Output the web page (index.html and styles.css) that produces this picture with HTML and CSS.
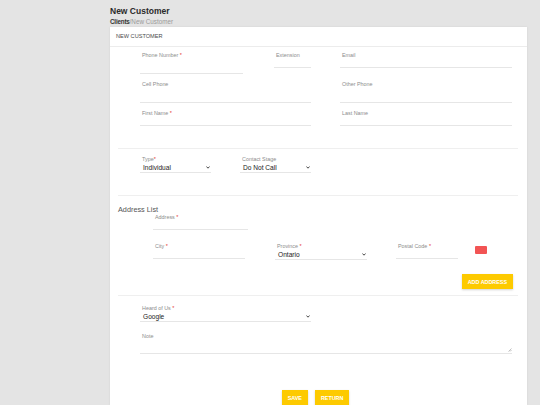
FILE: index.html
```html
<!DOCTYPE html>
<html>
<head>
<meta charset="utf-8">
<link rel="stylesheet" href="styles.css">
</head>
<body>
<div class="page">
  <h1 class="title">New Customer</h1>
  <div class="crumbs"><span class="crumb-link">Clients</span>/<span class="crumb-current">New Customer</span></div>
  <div class="card">
    <div class="card-header">NEW CUSTOMER</div>

    <div class="sec sec-contact">
      <div class="row">
        <div class="field w103"><div class="label">Phone Number <span class="req">*</span></div><div class="input tall"></div></div>
        <div class="field w37 ml31"><div class="label">Extension</div><div class="input"></div></div>
        <div class="field w172 ml29"><div class="label">Email</div><div class="input"></div></div>
      </div>
      <div class="row">
        <div class="field w171"><div class="label">Cell Phone</div><div class="input tall"></div></div>
        <div class="field w172 ml29"><div class="label">Other Phone</div><div class="input tall"></div></div>
      </div>
      <div class="row">
        <div class="field w171"><div class="label">First Name <span class="req">*</span></div><div class="input"></div></div>
        <div class="field w172 ml29"><div class="label">Last Name</div><div class="input"></div></div>
      </div>
    </div>
    <div class="divider"></div>

    <div class="sec sec-type">
      <div class="row">
        <div class="field w71"><div class="label">Type<span class="req">*</span></div>
          <div class="select"><span>Individual</span><svg class="chev" width="4" height="3" viewBox="0 0 4 3"><path d="M0.4 0.5 L2 2.2 L3.6 0.5" fill="none" stroke="#333" stroke-width="0.9"/></svg></div></div>
        <div class="field w71 ml29"><div class="label">Contact Stage</div>
          <div class="select"><span>Do Not Call</span><svg class="chev" width="4" height="3" viewBox="0 0 4 3"><path d="M0.4 0.5 L2 2.2 L3.6 0.5" fill="none" stroke="#333" stroke-width="0.9"/></svg></div></div>
      </div>
    </div>
    <div class="divider"></div>

    <div class="sec sec-addr">
      <div class="sec-title">Address List</div>
      <div class="addr-body">
        <div class="field w95"><div class="label">Address <span class="req">*</span></div><div class="input"></div></div>
        <div class="row addr-row">
          <div class="field w92"><div class="label">City <span class="req">*</span></div><div class="input"></div></div>
          <div class="field w92 ml30"><div class="label">Province <span class="req">*</span></div>
            <div class="select"><span>Ontario</span><svg class="chev" width="4" height="3" viewBox="0 0 4 3"><path d="M0.4 0.5 L2 2.2 L3.6 0.5" fill="none" stroke="#333" stroke-width="0.9"/></svg></div></div>
          <div class="field w62 ml29"><div class="label">Postal Code <span class="req">*</span></div><div class="input"></div></div>
          <div class="remove-btn"></div>
        </div>
        <div class="addr-actions"><div class="btn">ADD ADDRESS</div></div>
      </div>
    </div>
    <div class="divider tight"></div>

    <div class="sec sec-extra">
      <div class="field w171"><div class="label">Heard of Us <span class="req">*</span></div>
        <div class="select"><span>Google</span><svg class="chev" width="4" height="3" viewBox="0 0 4 3"><path d="M0.4 0.5 L2 2.2 L3.6 0.5" fill="none" stroke="#333" stroke-width="0.9"/></svg></div></div>
      <div class="field w372 note"><div class="label">Note</div>
        <div class="textarea"><svg class="grip" width="4" height="4" viewBox="0 0 4 4"><path d="M3.5 0.5 L0.5 3.5 M3.5 2 L2 3.5" stroke="#999" stroke-width="0.6"/></svg></div></div>
    </div>

    <div class="actions">
      <div class="btn">SAVE</div>
      <div class="btn">RETURN</div>
    </div>
  </div>
</div>
</body>
</html>
```

FILE: styles.css
```css
* { box-sizing: border-box; }
html, body { margin: 0; padding: 0; }
body {
  background: #e4e4e4;
  font-family: "Liberation Sans", Arial, sans-serif;
  width: 540px;
  height: 405px;
  overflow: hidden;
}
.page { margin-left: 110px; width: 417px; }
.title {
  margin: 0;
  padding-top: 6px;
  font-size: 8.5px;
  line-height: 10px;
  font-weight: 700;
  color: #2a2a2a;
}
.crumbs {
  margin-top: 2px;
  font-size: 6.3px;
  line-height: 8px;
  color: #9a9a9a;
  white-space: nowrap;
}
.crumb-link { color: #333; font-weight: 700; letter-spacing: -0.2px; }
.card {
  margin-top: 1px;
  background: #fff;
  box-shadow: 0 0 2px rgba(0,0,0,0.08);
  height: 378px;
  overflow: hidden;
}
.card-header {
  height: 20px;
  line-height: 19px;
  padding-left: 6px;
  font-size: 5.6px;
  color: #4a4a4a;
  border-bottom: 1px solid #ececec;
}
.row { display: flex; align-items: flex-start; }
.field { display: flex; flex-direction: column; flex: none; }
.label {
  font-size: 5.4px;
  line-height: 6px;
  height: 6px;
  color: #8c8c8c;
  padding-left: 2px;
  white-space: nowrap;
}
.req { color: #e53935; }
.input { height: 10px; border-bottom: 1px solid #e6e6e6; }
.input.tall { height: 16px; }
.select {
  height: 11px;
  border-bottom: 1px solid #e6e6e6;
  display: flex;
  align-items: center;
  justify-content: space-between;
  padding: 0 1px 0 3px;
  font-size: 6.6px;
  color: #222;
  white-space: nowrap;
}
.chev { display: block; }
.textarea {
  height: 15px;
  border-bottom: 1px solid #e6e6e6;
  position: relative;
}
.grip { position: absolute; right: 0; bottom: 1px; }

.w37 { width: 37px; }
.w62 { width: 62px; }
.w71 { width: 71px; }
.w92 { width: 92px; }
.w95 { width: 95px; }
.w103 { width: 103px; }
.w171 { width: 171px; }
.w172 { width: 172px; }
.w372 { width: 372px; }
.ml29 { margin-left: 29px; }
.ml30 { margin-left: 30px; }
.ml31 { margin-left: 31px; }

.divider {
  height: 1px;
  background: #efefef;
  margin: 22px 9px 0 8px;
}
.divider.tight { margin-top: 6px; }

.sec-contact { padding: 5px 0 0 30px; }
.sec-contact .row + .row { margin-top: 7px; }
.sec-type { padding: 7px 0 0 30px; }

.sec-addr { padding: 9px 14px 0 8px; }
.sec-title {
  font-size: 7.3px;
  line-height: 9px;
  color: #555;
}
.addr-body { padding-left: 35px; }
.addr-row { margin-top: 13px; }
.remove-btn {
  width: 12px;
  height: 8px;
  margin: 3px 0 0 17px;
  background: #f25454;
  border-radius: 1px;
}
.addr-actions { display: flex; justify-content: flex-end; margin-top: 14px; }

.btn {
  background: #fdca00;
  color: #fff;
  font-weight: 700;
  font-size: 5.4px;
  height: 15px;
  padding: 0 6px;
  display: flex;
  align-items: center;
  box-shadow: 0 1px 2px rgba(0,0,0,0.18);
  white-space: nowrap;
}

.sec-extra { padding: 9px 15px 0 30px; }
.note { margin-top: 11px; }

.actions {
  display: flex;
  justify-content: center;
  gap: 7px;
  margin-top: 36px;
  padding-right: 6px;
}
```
